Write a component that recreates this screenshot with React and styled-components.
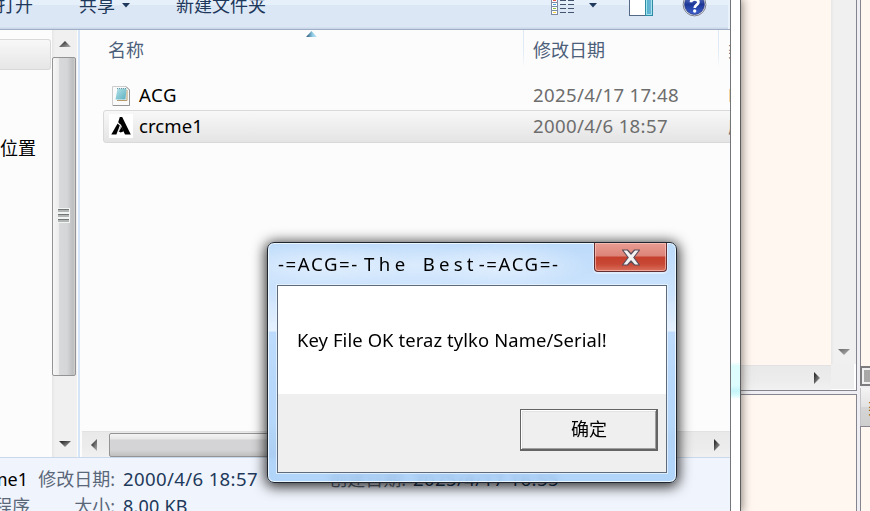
import React from "react";
import styled, { createGlobalStyle, css } from "styled-components";

const Global = createGlobalStyle`
  * { box-sizing: border-box; }
  body { margin: 0; overflow: hidden; font-family: "Noto Sans", "Noto Sans CJK SC", sans-serif; font-size: 18px; }
  svg { display: block; flex: none; }
`;

const Desktop = styled.div`
  position: relative;
  display: flex;
  width: 870px;
  height: 511px;
  overflow: hidden;
  background: #efeff1;
`;

const Text = styled.span`
  display: block;
  flex: none;
  white-space: pre;
  line-height: 24px;
  font-size: ${(p) => p.$size || 18}px;
  letter-spacing: ${(p) => p.$track || 0}px;
  margin-left: ${(p) => p.$left || 0}px;
  color: ${(p) => p.$color || "#000"};
`;

/* ---------- explorer window ---------- */

const Explorer = styled.main`
  position: relative;
  z-index: 1;
  flex: none;
  display: flex;
  width: 741px;
  height: 511px;
  border-right: 1px solid #5b5d5f;
  background: linear-gradient(#fff 0 362px, #ddfdfd 366px 385px, #c5f5fa 391px, #ddfdfd 396px, #fff 399px);
  box-shadow: 0 0 9px 1px rgba(60, 50, 40, 0.6);
`;

const ExplorerBody = styled.div`
  display: flex;
  flex-direction: column;
  width: 731px;
  overflow: hidden;
  border-right: 1px solid #74777a;
  background: #fcfcfc;
`;

const Toolbar = styled.header`
  flex: none;
  display: flex;
  align-items: flex-start;
  height: 30px;
  border-bottom: 1px solid #a0afc6;
  background: linear-gradient(#e6f0fb 0 5px, #dce7f5 5px 27px, #cbd8ea 28px);
  box-shadow: inset -2px 0 #e9f1fa;
`;

const ToolLabel = styled(Text)`
  margin-top: -7px;
`;

const Middle = styled.div`
  display: flex;
  height: 427px;
`;

const NavPane = styled.nav`
  flex: none;
  width: 52px;
  padding-top: 9px;
`;

const NavSelected = styled.div`
  width: 51px;
  height: 31px;
  border: 1px solid #d9d9d9;
  border-left: 0;
  border-radius: 0 3px 3px 0;
  background: linear-gradient(#f8f8f8, #e6e6e6);
`;

const NavItem = styled.div`
  padding-top: 66px;
`;

const VScroll = styled.div`
  flex: none;
  display: flex;
  flex-direction: column;
  justify-content: space-between;
  align-items: center;
  width: 25px;
  height: ${(p) => p.$height}px;
  padding: ${(p) => p.$pad || "0"};
  background: linear-gradient(90deg, #e6e6e6, #f0f0f0 3px, #f0f0f0);
`;

const VThumb = styled.div`
  display: flex;
  align-items: center;
  justify-content: center;
  width: 24px;
  height: 319px;
  margin: 10px 1px auto 0;
  padding: 0 1px 2px 0;
  border: 1px solid #949494;
  border-radius: 2px;
  background: linear-gradient(90deg, #f6f6f6, #ececec 6px, #d8d9db 6px, #d5d6d8 14px, #bcbdbe 20px, #d0d0d0);
`;

const Divider = styled.div`
  flex: none;
  width: 2px;
  margin-left: 1px;
  background: #d6e4f7;
`;

const FileList = styled.section`
  display: flex;
  flex-direction: column;
  flex: 1;
  min-width: 0;
  overflow: hidden;
  padding-left: 2px;
`;

const Columns = styled.div`
  display: flex;
  height: 49px;
  padding-left: 26px;
`;

const Column = styled.div`
  flex: none;
  width: ${(p) => p.$width}px;
  height: 37px;
  padding: 8px 0 0 ${(p) => p.$pad || 0}px;
  ${(p) =>
    p.$pad &&
    css`
      border-left: 1px solid;
      border-image: linear-gradient(#dce8f4, #e2ecf6 60%, #fcfcfc) 1;
    `}
`;

const SortMark = styled.div`
  display: flex;
  width: 12px;
  margin: -31px 0 0 198px;
`;

const FileRow = styled.div`
  flex: none;
  display: flex;
  align-items: center;
  width: 700px;
  height: ${(p) => (p.$selected ? 33 : 31)}px;
  margin-left: 21px;
  padding: 0 0 ${(p) => (p.$selected ? "1px 5px" : "0 6px")};
  ${(p) =>
    p.$selected &&
    css`
      border: 1px solid #d9d9d9;
      border-radius: 3px;
      background: linear-gradient(#f8f8f8, #e4e4e4);
    `}
`;

const FileIcon = styled.div`
  flex: none;
  width: 24px;
  height: 24px;
`;

const FileName = styled.div`
  flex: none;
  width: 400px;
  padding-left: 6px;
`;

const FileDate = styled.div`
  flex: none;
  width: 195px;
`;

const HScroll = styled.div`
  flex: none;
  display: flex;
  align-items: center;
  height: ${(p) => p.$height}px;
  margin-top: auto;
  padding: ${(p) => p.$pad};
  justify-content: ${(p) => (p.$end ? "flex-end" : "flex-start")};
  border-top: 1px solid #e2e2e4;
  background: linear-gradient(#e9e9e9, #ececec 60%, #f1f1f1);
`;

const HThumb = styled.div`
  width: 430px;
  height: 24px;
  margin: 0 auto 0 12px;
  border: 1px solid #949494;
  border-radius: 2px;
  background: linear-gradient(#f4f4f4, #e8e8e8 5px, #d4d4d6 6px, #d4d4d6 16px, #bfbfc0);
`;

const Details = styled.footer`
  flex: none;
  height: 54px;
  padding-top: 9px;
  border-top: 1px solid #cad8ea;
  background: #f0f4fc;
`;

const DetailLine = styled.div`
  display: flex;
  height: 27px;
`;

const DetailCell = styled.div`
  flex: none;
  display: flex;
  justify-content: ${(p) => (p.$end ? "flex-end" : "flex-start")};
  width: ${(p) => p.$width}px;
  padding-right: ${(p) => p.$gap || 0}px;
`;

/* ---------- editor window behind ---------- */

const Editor = styled.aside`
  flex: none;
  display: flex;
  justify-content: space-between;
  width: 129px;
  height: 511px;
  background: #efeff3;
`;

const EditorColumn = styled.div`
  display: flex;
  flex-direction: column;
  justify-content: space-between;
  width: 116px;
`;

const CodePane = styled.div`
  display: flex;
  flex-direction: column;
  height: 391px;
  border-right: 1px solid #858590;
  border-bottom: 1px solid #858590;
  background: #fff7f0;
`;

const CodeTop = styled.div`
  display: flex;
  justify-content: flex-end;
  height: 364px;
`;

const CodeBottom = styled.div`
  display: flex;
  height: 26px;
`;

const EditorHScroll = styled(HScroll)`
  width: 90px;
  margin-top: 1px;
`;

const ScrollCorner = styled.div`
  flex: 1;
  border-right: 2px solid #fff;
  border-bottom: 1px solid #fff;
  background: #efefef;
`;

const LowerPane = styled.div`
  height: 117px;
  border-top: 1px solid #858590;
  border-right: 1px solid #858590;
  background: #fff7f0;
`;

const SideColumn = styled.div`
  display: flex;
  flex-direction: column;
  width: 10px;
  overflow: hidden;
`;

const SidePane = styled.div`
  flex: none;
  height: ${(p) => p.$height}px;
  border-left: 1px solid #858590;
  border-top: ${(p) => (p.$top ? "1px solid #858590" : "0")};
  background: #fff7f0;
`;

const SideThumb = styled.div`
  flex: none;
  width: 24px;
  height: 20px;
  border: 2px solid #7c7c7e;
  padding: 2px;
  background: linear-gradient(#a8a8a8, #a8a8a8) content-box, #f0f0f0;
`;

const SideTab = styled.div`
  flex: none;
  display: flex;
  align-items: center;
  height: 38px;
  margin-top: 2px;
  padding-left: 7px;
  border-left: 1px solid #c4c4c8;
  background: linear-gradient(#f4f4f4, #e2e2e2 50%, #d6d6d6 51%, #cecece);
`;

/* ---------- message box ---------- */

const Dialog = styled.section`
  position: absolute;
  z-index: 2;
  left: 267px;
  top: 242px;
  width: 410px;
  height: 241px;
  padding: 0 9px 9px;
  border: 1px solid #1f2630;
  border-radius: 7px;
  background:
    radial-gradient(ellipse 90px 24px at 50px 22px, rgba(235, 244, 255, 0.75), transparent),
    radial-gradient(ellipse 110px 24px at 150px 22px, rgba(235, 244, 255, 0.6), transparent),
    radial-gradient(ellipse 80px 24px at 240px 22px, rgba(235, 244, 255, 0.75), transparent),
    linear-gradient(rgba(184, 216, 250, 0.93), rgba(200, 225, 252, 0.93) 50px, rgba(228, 240, 254, 0.92) 88px, rgba(184, 216, 252, 0.92) 89px, rgba(170, 209, 250, 0.85) 150px, rgba(166, 206, 248, 0.85));
  backdrop-filter: blur(3px);
  box-shadow: inset 0 0 0 1px rgba(240, 249, 255, 0.9), 0 2px 13px 2px rgba(0, 0, 0, 0.8);
`;

const TitleBar = styled.div`
  display: flex;
  align-items: flex-start;
  height: 42px;
`;

const Title = styled.h1`
  display: flex;
  margin: 0;
  padding-top: 9px;
  font-weight: 400;
`;

const CloseButton = styled.button`
  display: flex;
  align-items: center;
  justify-content: center;
  width: 73px;
  height: 29px;
  margin-left: auto;
  padding: 0;
  border: 1px solid #652e30;
  border-top: 0;
  border-radius: 0 0 4px 4px;
  background: linear-gradient(#e99d93, #dd8378 13px, #c5402d 14px, #c84835 21px, #d9705c);
  box-shadow: inset 0 0 0 1px rgba(255, 206, 198, 0.6), 0 1px 0 1px rgba(232, 244, 255, 0.7);
`;

const DialogClient = styled.div`
  display: flex;
  flex-direction: column;
  height: 188px;
  border: 1px solid #5e6b7b;
  background: #fff;
  box-shadow: 0 0 0 1px rgba(232, 244, 255, 0.8);
`;

const Message = styled.p`
  height: 108px;
  margin: 0;
  padding: 42px 0 0 19px;
`;

const Actions = styled.div`
  display: flex;
  justify-content: flex-end;
  flex: 1;
  padding: 15px 8px 0 0;
  background: #efefef;
`;

const OkButton = styled.button`
  display: flex;
  align-items: center;
  justify-content: center;
  width: 138px;
  height: 42px;
  padding: 0 0 1px 1px;
  font: inherit;
  border: 1px solid #646464;
  border-right-width: 2px;
  border-bottom-width: 2px;
  background: #efefef;
  box-shadow: inset 1px 1px #fff, inset -1px -1px #a0a0a0, inset 2px 2px #e3e3e3;
`;

const Arrow = ({ dir, color = "#333333" }) => {
  const d = {
    up: "M0 6L6 0L12 6Z",
    down: "M0 0H12L6 6Z",
    left: "M6 0V12L0 6Z",
    right: "M0 0V12L6 6Z",
  }[dir];
  const flat = dir === "up" || dir === "down";
  return (
    <svg width={flat ? 12 : 6} height={flat ? 6 : 12}>
      <defs>
        <linearGradient id={`arrow-${dir}-${color.slice(1)}`} x2="1" y2="1">
          <stop offset="0.2" stopColor={color} />
          <stop offset="1" stopColor="#b5b5b5" />
        </linearGradient>
      </defs>
      <path d={d} fill={`url(#arrow-${dir}-${color.slice(1)})`} />
    </svg>
  );
};

const DropSvg = styled.svg`
  margin: 3px 0 0 ${(p) => p.$left}px;
`;

const Drop = ({ left }) => (
  <DropSvg $left={left} width="8" height="5">
    <path d="M0 0H8L4 4.5Z" fill="#1e395b" />
  </DropSvg>
);

const ViewSvg = styled.svg`
  margin: -6px 0 0 285px;
`;
const PaneSvg = styled.svg`
  margin-left: 32px;
`;
const HelpSvg = styled.svg`
  margin: -9px 0 0 28px;
`;

const ViewIcon = () => (
  <ViewSvg width="25" height="22" shapeRendering="crispEdges">
    {["#e5534b", "#4aa3df", "#8cc63f", "#f2d13c"].map((c, i) => (
      <g key={c}>
        <rect x="0.5" y={4.5 + i * 4} width="6" height="4" fill="#fff" stroke="#7c8ba3" />
        <rect x="2" y={6 + i * 4} width="3" height="1" fill={c} />
        <path d={`M9 ${6.5 + i * 4}h6M17 ${6.5 + i * 4}h6`} stroke="#44546e" />
      </g>
    ))}
  </ViewSvg>
);

const PaneIcon = () => (
  <PaneSvg width="25" height="16">
    <defs>
      <linearGradient id="paneFill" x2="1">
        <stop offset="0" stopColor="#49b3c9" />
        <stop offset="1" stopColor="#7ab4dc" />
      </linearGradient>
    </defs>
    <rect x="0.5" y="-5" width="23" height="20.5" fill="#fff" stroke="#536985" />
    <rect x="16.5" y="-5" width="7" height="20.5" fill="url(#paneFill)" stroke="#308ba4" />
    <path d="M17.5 0V14.5H22.5V0" stroke="#a6e5ec" fill="none" />
  </PaneSvg>
);

const HelpIcon = () => (
  <HelpSvg width="26" height="26">
    <defs>
      <linearGradient id="helpFill" x2="0" y2="1">
        <stop offset="0" stopColor="#7089d0" />
        <stop offset="0.5" stopColor="#1d3798" />
        <stop offset="1" stopColor="#3f63d0" />
      </linearGradient>
    </defs>
    <circle cx="12.5" cy="13.5" r="11.4" fill="#e4e8f1" stroke="#7b7f8d" />
    <circle cx="12.5" cy="13.5" r="9.9" fill="url(#helpFill)" stroke="#283980" strokeWidth="0.8" />
    <path d="M9 11.3C9 7.3 16.4 7.3 16.4 11.3C16.4 14 12.7 13.9 12.7 17" fill="none" stroke="#fff" strokeWidth="2.7" />
    <circle cx="12.7" cy="20" r="1.7" fill="#fff" />
  </HelpSvg>
);

const NoteIcon = () => (
  <svg width="24" height="24">
    <defs>
      <linearGradient id="noteFill" x2="1" y2="1">
        <stop offset="0" stopColor="#b4e4ea" />
        <stop offset="1" stopColor="#5eafc0" />
      </linearGradient>
    </defs>
    <path d="M3.5 3.5H17L20.5 7V22.5H3.5Z" fill="#fafafa" stroke="#cdcdcd" />
    <path d="M17 3.5L20.5 7M4 22.5H20.5V7" fill="none" stroke="#959595" />
    <path d="M8 17.5H18V7" fill="none" stroke="#b69a68" />
    <path d="M8.5 5.5H17.5L16.5 16.5H6.5Z" fill="url(#noteFill)" />
    <path d="M8 5.6H17" stroke="#5f8e98" strokeDasharray="1 1" />
  </svg>
);

const AppIcon = () => (
  <svg width="24" height="24">
    <rect width="24" height="24" fill="#fff" />
    <path d="M10.8 3H13.2L21.8 20.5H16L12.5 13L11.3 10.4L9.2 8.3Z" fill="#000" />
    <path d="M8.6 9.5L10.8 11.6L7.4 20.5H2.3Z" fill="#000" />
    <path d="M12 12L14.8 17.2L11.7 18.4L9.6 17.3Z" fill="#000" />
    <path d="M11.3 10.4L12.4 12.6L9.8 17" fill="none" stroke="#fff" strokeWidth="0.8" />
  </svg>
);

const Sort = () => (
  <svg width="11" height="6">
    <defs>
      <linearGradient id="sortFill" x2="1">
        <stop offset="0.15" stopColor="#3e6f8c" />
        <stop offset="0.6" stopColor="#93cee9" />
        <stop offset="1" stopColor="#c8e8f7" />
      </linearGradient>
    </defs>
    <path d="M0 6L5.5 0L11 6Z" fill="url(#sortFill)" />
  </svg>
);

const Grip = () => (
  <svg width="13" height="16" shapeRendering="crispEdges">
    {[0, 5, 10].map((y) => (
      <g key={y}>
        <rect y={y} width="13" height="5" fill="#f2f3f3" />
        <rect x="1" y={y + 1} width="11" height="1" fill="#717573" />
        <rect x="1" y={y + 2} width="11" height="2" fill="#b2b6b4" />
      </g>
    ))}
  </svg>
);

const Cross = () => (
  <svg width="20" height="17">
    <path
      d="M1.5 1H6.5L10 5L13.5 1H18.5L12.8 8.5L18.5 16H13.5L10 12L6.5 16H1.5L7.2 8.5Z"
      fill="#f3f3f3"
      stroke="#5b4c59"
      strokeWidth="1.2"
      strokeLinejoin="round"
    />
  </svg>
);

const ink = "#1e395b";
const muted = "#5a6779";
const gray = "#6d6d6d";

export default function App() {
  return (
    <Desktop>
      <Global />
      <Explorer>
        <ExplorerBody>
          <Toolbar>
            <ToolLabel $color={ink} $left={-3}>打开</ToolLabel>
            <ToolLabel $color={ink} $left={46}>共享</ToolLabel>
            <Drop left={7} />
            <ToolLabel $color={ink} $left={46}>新建文件夹</ToolLabel>
            <ViewIcon />
            <Drop left={13} />
            <PaneIcon />
            <HelpIcon />
          </Toolbar>
          <Middle>
            <NavPane>
              <NavSelected />
              <NavItem>
                <Text>位置</Text>
              </NavItem>
            </NavPane>
            <VScroll $height={427} $pad="11px 0 10px">
              <Arrow dir="up" />
              <VThumb>
                <Grip />
              </VThumb>
              <Arrow dir="down" />
            </VScroll>
            <Divider />
            <FileList>
              <Columns>
                <Column $width={415}>
                  <Text $color="#4c607a">名称</Text>
                  <SortMark>
                    <Sort />
                  </SortMark>
                </Column>
                <Column $width={195} $pad={9}>
                  <Text $color="#4c607a">修改日期</Text>
                </Column>
                <Column $width={60} $pad={9}>
                  <Text $color="#4c607a">类型</Text>
                </Column>
              </Columns>
              <FileRow>
                <FileIcon><NoteIcon /></FileIcon>
                <FileName><Text $size={18.6} $track={0.6}>ACG</Text></FileName>
                <FileDate><Text $color={gray} $size={18.6} $track={0.35}>2025/4/17 17:48</Text></FileDate>
                <Text $color={gray}>FKY 文件</Text>
              </FileRow>
              <FileRow $selected>
                <FileIcon><AppIcon /></FileIcon>
                <FileName><Text $size={18.6} $track={0.05}>crcme1</Text></FileName>
                <FileDate><Text $color={gray} $size={18.6} $track={0.35}>2000/4/6 18:57</Text></FileDate>
                <Text $color={gray}>应用程序</Text>
              </FileRow>
              <HScroll $height={26} $pad="0 10px 0 9px">
                <Arrow dir="left" />
                <HThumb />
                <Arrow dir="right" />
              </HScroll>
            </FileList>
          </Middle>
          <Details>
            <DetailLine>
              <DetailCell $width={36} $gap={8} $end><Text>crcme1</Text></DetailCell>
              <DetailCell $width={87} $gap={8} $end><Text $color={muted}>修改日期:</Text></DetailCell>
              <DetailCell $width={206}><Text $color={ink} $size={18.6} $track={0.35}>2000/4/6 18:57</Text></DetailCell>
              <DetailCell $width={84} $gap={7} $end><Text $color={muted}>创建日期:</Text></DetailCell>
              <Text $color={ink} $size={18.6} $track={0.35}>2025/4/17 16:55</Text>
            </DetailLine>
            <DetailLine>
              <DetailCell $width={36} $gap={6} $end><Text $color={muted}>应用程序</Text></DetailCell>
              <DetailCell $width={87} $gap={8} $end><Text $color={muted}>大小:</Text></DetailCell>
              <Text $color={ink} $track={0.2}>8.00 KB</Text>
            </DetailLine>
          </Details>
        </ExplorerBody>
      </Explorer>
      <Editor>
        <EditorColumn>
          <CodePane>
            <CodeTop>
              <VScroll $height={364} $pad="0 0 9px">
                <span />
                <Arrow dir="down" color="#777777" />
              </VScroll>
            </CodeTop>
            <CodeBottom>
              <EditorHScroll $height={25} $pad="0 11px 1px" $end>
                <Arrow dir="right" />
              </EditorHScroll>
              <ScrollCorner />
            </CodeBottom>
          </CodePane>
          <LowerPane />
        </EditorColumn>
        <SideColumn>
          <SidePane $height={366} />
          <SideThumb />
          <SideTab>
            <Text $color="#8a4a10">类</Text>
          </SideTab>
          <SidePane $height={85} $top />
        </SideColumn>
      </Editor>
      <Dialog>
        <TitleBar>
          <Title>
            <Text $size={18.6} $track={1.6} $left={1}>-=ACG=-</Text>
            <Text $size={18.6} $track={4.5} $left={5}>The</Text>
            <Text $size={18.6} $track={4.2} $left={13}>Best</Text>
            <Text $size={18.6} $track={1.6} $left={1}>-=ACG=-</Text>
          </Title>
          <CloseButton aria-label="Close">
            <Cross />
          </CloseButton>
        </TitleBar>
        <DialogClient>
          <Message>
            <Text $size={18.4} $track={0.1}>Key File OK teraz tylko Name/Serial!</Text>
          </Message>
          <Actions>
            <OkButton>
              <Text>确定</Text>
            </OkButton>
          </Actions>
        </DialogClient>
      </Dialog>
    </Desktop>
  );
}
